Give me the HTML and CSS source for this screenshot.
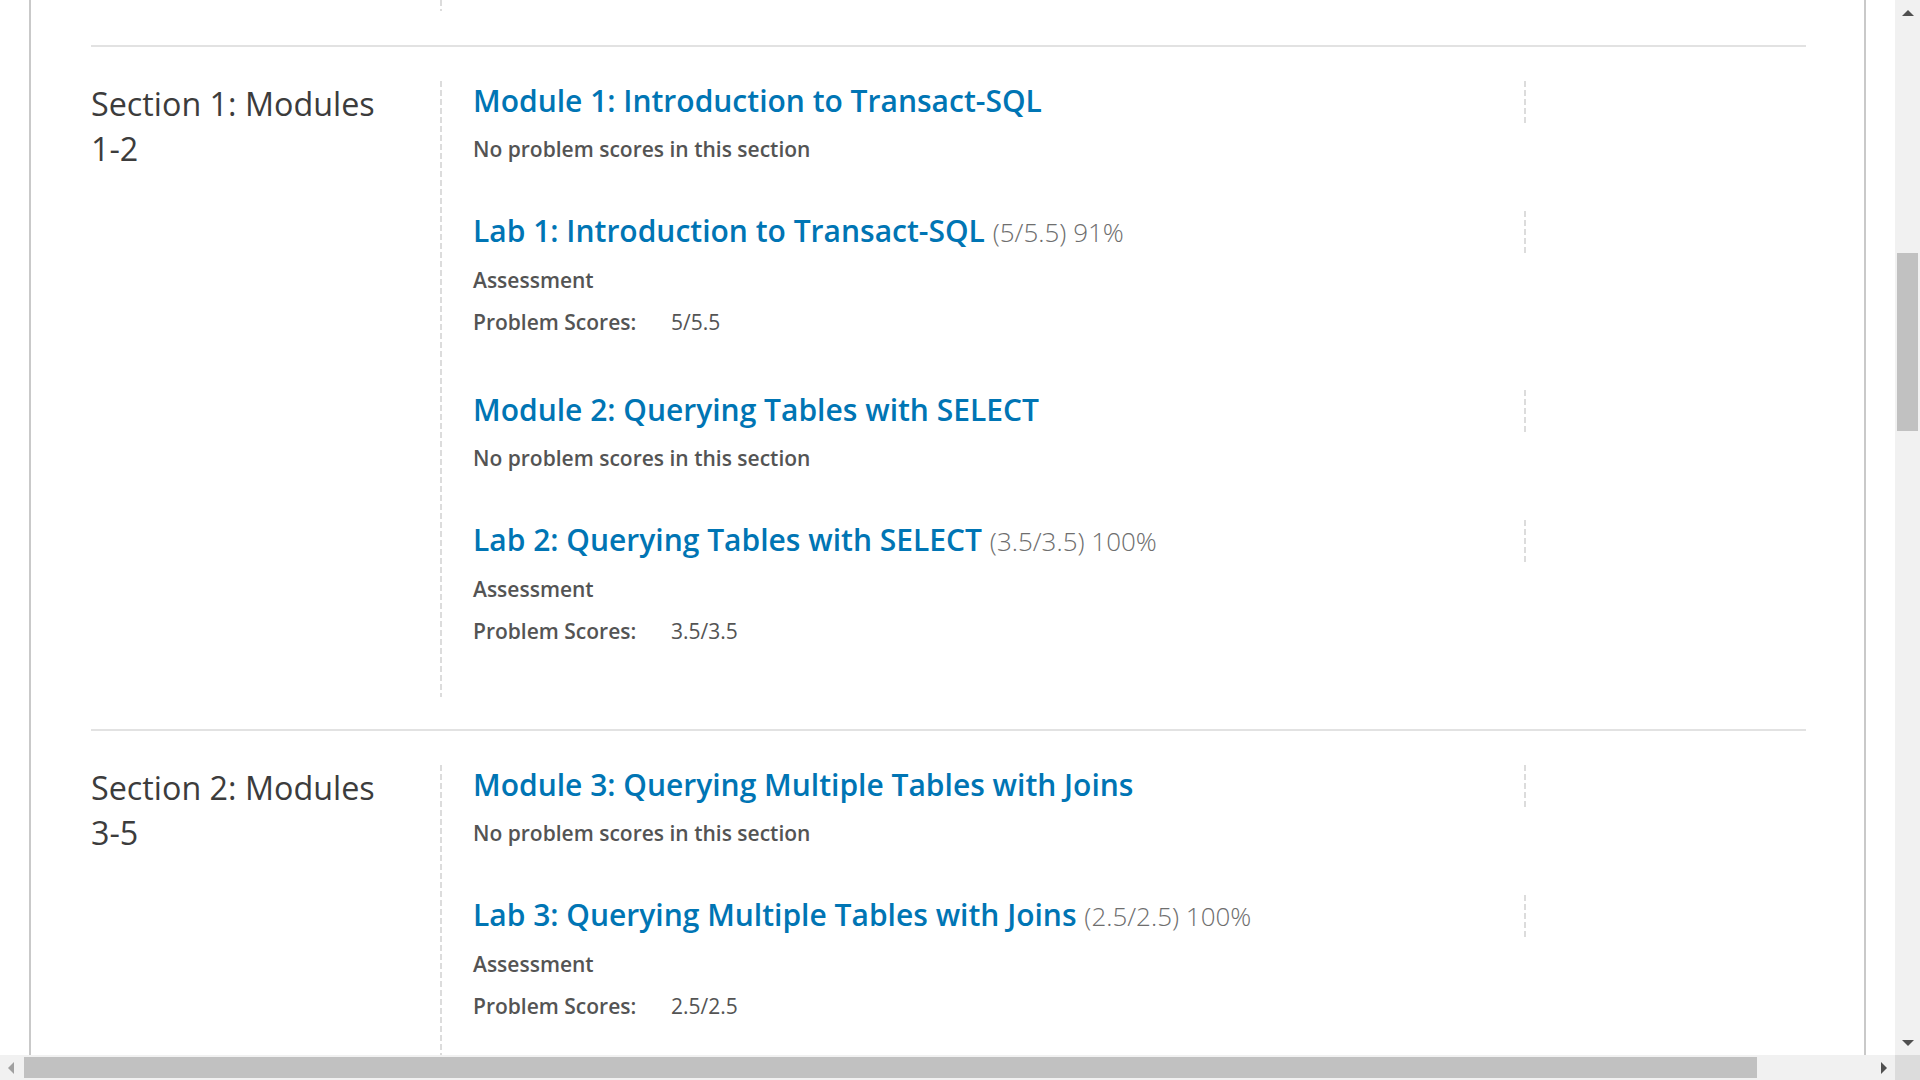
FILE: index.html
```html
<!DOCTYPE html>
<html lang="en">
<head>
<meta charset="utf-8">
<title>Progress</title>
<link rel="stylesheet" href="styles.css">
</head>
<body>
<div class="window">
  <div class="view-row">
    <div class="frame-area">
      <div class="frame">
        <div class="chapters">
          <section class="chapter stub">
            <div class="chapter-title"></div>
            <div class="sections stub-sections"></div>
          </section>

          <section class="chapter">
            <div class="chapter-title"><h2>Section 1: Modules 1-2</h2></div>
            <div class="sections">
              <div class="block module">
                <div class="head"><h3><a href="#">Module 1: Introduction to Transact-SQL</a></h3></div>
                <p class="note">No problem scores in this section</p>
              </div>
              <div class="block lab">
                <div class="head"><h3><a href="#">Lab 1: Introduction to Transact-SQL</a> <span class="score">(5/5.5) 91%</span></h3></div>
                <p class="note">Assessment</p>
                <div class="scores"><span class="label">Problem Scores:</span><span class="value">5/5.5</span></div>
              </div>
              <div class="block module">
                <div class="head"><h3><a href="#">Module 2: Querying Tables with SELECT</a></h3></div>
                <p class="note">No problem scores in this section</p>
              </div>
              <div class="block lab">
                <div class="head"><h3><a href="#">Lab 2: Querying Tables with SELECT</a> <span class="score">(3.5/3.5) 100%</span></h3></div>
                <p class="note">Assessment</p>
                <div class="scores"><span class="label">Problem Scores:</span><span class="value">3.5/3.5</span></div>
              </div>
            </div>
          </section>

          <section class="chapter">
            <div class="chapter-title"><h2>Section 2: Modules 3-5</h2></div>
            <div class="sections">
              <div class="block module">
                <div class="head"><h3><a href="#">Module 3: Querying Multiple Tables with Joins</a></h3></div>
                <p class="note">No problem scores in this section</p>
              </div>
              <div class="block lab">
                <div class="head"><h3><a href="#">Lab 3: Querying Multiple Tables with Joins</a> <span class="score">(2.5/2.5) 100%</span></h3></div>
                <p class="note">Assessment</p>
                <div class="scores"><span class="label">Problem Scores:</span><span class="value">2.5/2.5</span></div>
              </div>
            </div>
          </section>
        </div>
      </div>
    </div>
    <div class="vscroll">
      <div class="sb-btn"><span class="tri tri-up"></span></div>
      <div class="vtrack"><div class="vthumb"></div></div>
      <div class="sb-btn"><span class="tri tri-down"></span></div>
    </div>
  </div>
  <div class="hscroll-row">
    <div class="hscroll">
      <div class="sb-hbtn"><span class="tri tri-left"></span></div>
      <div class="htrack"><div class="hthumb"></div></div>
      <div class="sb-hbtn"><span class="tri tri-right"></span></div>
    </div>
    <div class="corner"></div>
  </div>
</div>
</body>
</html>
```
FILE: styles.css
```css
* { box-sizing: border-box; }

html, body {
  margin: 0;
  padding: 0;
  width: 1920px;
  height: 1080px;
  overflow: hidden;
  background: #ffffff;
  font-family: "Open Sans", "Noto Sans", "Liberation Sans", sans-serif;
}

.window {
  display: flex;
  flex-direction: column;
  width: 1920px;
  height: 1080px;
}

.view-row {
  display: flex;
  height: 1055px;
}

.frame-area {
  flex: 1;
  height: 1055px;
  overflow: hidden;
  padding: 0 29px;
}

.frame {
  height: 1055px;
  overflow: hidden;
  border-left: 2px solid #c9c9c9;
  border-right: 2px solid #c9c9c9;
}

.chapters {
  padding: 0 58px 0 60px;
}

.chapter {
  display: flex;
  border-top: 2px solid #e2e2e2;
  padding: 34px 0 32px;
}

.chapter.stub {
  border-top: none;
  padding: 0 0 34px;
}

.stub-sections {
  height: 11px;
}

.chapter-title {
  width: 349px;
  flex: none;
}

.chapter-title h2 {
  margin: 0;
  width: 300px;
  font-size: 32.3px;
  line-height: 45px;
  font-weight: 400;
  color: #3c3c3c;
}

.sections {
  flex: 1;
  padding-left: 33px;
  background: repeating-linear-gradient(to bottom, #dcdcdc 0 6px, transparent 6px 9px) left top / 2px 100% no-repeat;
}

.block.module { padding-bottom: 48px; }
.block.lab { padding-bottom: 54px; }
.chapter .sections .block.lab:last-child { padding-bottom: 52px; }

.head {
  width: 1053px;
  height: 42px;
  background: repeating-linear-gradient(to bottom, #dcdcdc 0 6px, transparent 6px 9px) right top / 2px 100% no-repeat;
}

.head h3 {
  margin: 0;
  font-size: 30px;
  line-height: 40px;
  font-weight: 600;
  white-space: nowrap;
}

.head h3 a {
  color: #0075b4;
  text-decoration: none;
}

.score {
  font-size: 26px;
  font-weight: 300;
  color: #6e6e6e;
}

.note {
  margin: 12px 0 0;
  font-size: 21px;
  line-height: 28px;
  font-weight: 600;
  color: #545454;
}

.lab .note { margin-top: 13px; }

.scores {
  margin-top: 14px;
  display: flex;
  font-size: 21px;
  line-height: 28px;
  color: #545454;
}

.scores .label {
  width: 198px;
  font-weight: 600;
}

.scores .value {
  font-weight: 400;
}

/* scrollbars */
.vscroll {
  width: 25px;
  height: 1055px;
  background: #f1f1f1;
  display: flex;
  flex-direction: column;
}

.sb-btn {
  height: 25px;
  display: flex;
  align-items: center;
  justify-content: center;
}

.vtrack {
  flex: 1;
  padding: 228px 2px 0;
}

.vthumb {
  height: 178px;
  background: #c1c1c1;
}

.hscroll-row {
  display: flex;
  height: 25px;
}

.hscroll {
  flex: 1;
  display: flex;
  background: #f1f1f1;
}

.sb-hbtn {
  width: 22px;
  display: flex;
  align-items: center;
  justify-content: center;
}

.htrack {
  flex: 1;
  padding: 2px 0 2px 2px;
}

.hthumb {
  width: 1733px;
  height: 21px;
  background: #c1c1c1;
}

.corner {
  width: 25px;
  background: #dcdcdc;
}

.tri {
  width: 0;
  height: 0;
  display: block;
}

.tri-up {
  border-left: 6px solid transparent;
  border-right: 6px solid transparent;
  border-bottom: 6px solid #505050;
}

.tri-down {
  border-left: 6px solid transparent;
  border-right: 6px solid transparent;
  border-top: 6px solid #505050;
}

.tri-left {
  border-top: 6px solid transparent;
  border-bottom: 6px solid transparent;
  border-right: 6px solid #a0a0a0;
}

.tri-right {
  border-top: 6px solid transparent;
  border-bottom: 6px solid transparent;
  border-left: 6px solid #505050;
}
```
